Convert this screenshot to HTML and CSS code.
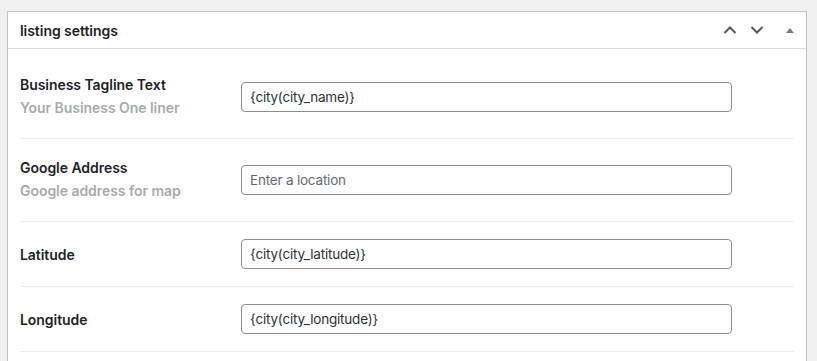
FILE: index.html
```html
<!DOCTYPE html>
<html lang="en">
  <head>
    <meta charset="UTF-8" />
    <meta name="viewport" content="width=device-width, initial-scale=1.0" />
    <title>listing settings</title>
    <link rel="stylesheet" href="styles.css">
  </head>
  <body>
    <div class="postbox">
      <div class="postbox-header">
        <h2 class="postbox-title">listing settings</h2>
        <div class="handle-actions">
          <button class="handle-btn" aria-label="Move up">
            <svg width="14" height="10" viewBox="0 0 14 10">
              <path d="M1.5 8 L7 2.5 L12.5 8" fill="none" stroke="#50575e" stroke-width="2" />
            </svg>
          </button>
          <button class="handle-btn" aria-label="Move down">
            <svg width="14" height="10" viewBox="0 0 14 10">
              <path d="M1.5 2 L7 7.5 L12.5 2" fill="none" stroke="#50575e" stroke-width="2" />
            </svg>
          </button>
          <button class="handle-btn toggle" aria-label="Toggle panel">
            <svg width="10" height="8" viewBox="0 0 10 8">
              <path d="M1 7 L5 2 L9 7 Z" fill="#787c82" />
            </svg>
          </button>
        </div>
      </div>

      <div class="postbox-inside">
        <div class="field-row">
          <div class="field-label">
            <label for="tagline">Business Tagline Text</label>
            <span class="field-desc">Your Business One liner</span>
          </div>
          <input id="tagline" class="field-input" type="text" value="{city(city_name)}" />
        </div>

        <div class="field-row">
          <div class="field-label">
            <label for="address">Google Address</label>
            <span class="field-desc">Google address for map</span>
          </div>
          <input id="address" class="field-input" type="text" placeholder="Enter a location" />
        </div>

        <div class="field-row">
          <div class="field-label">
            <label for="lat">Latitude</label>
          </div>
          <input id="lat" class="field-input" type="text" value="{city(city_latitude)}" />
        </div>

        <div class="field-row">
          <div class="field-label">
            <label for="lng">Longitude</label>
          </div>
          <input id="lng" class="field-input" type="text" value="{city(city_longitude)}" />
        </div>
      </div>
    </div>
  </body>
</html>
```

FILE: styles.css
```css
body {
  margin: 0;
  padding: 11px 10px 0 7px;
  background: #f0f0f1;
  font-family: Inter, "Liberation Sans", Arial, sans-serif;
  color: #1d2327;
}

.postbox {
  background: #fff;
  border: 1px solid #c3c4c7;
  border-bottom: none;
}

.postbox-header {
  display: flex;
  align-items: center;
  justify-content: space-between;
  height: 36px;
  padding: 0 12px;
  border-bottom: 1px solid #dcdcde;
}

.postbox-title {
  margin: 0;
  font-size: 14px;
  font-weight: 600;
  letter-spacing: -0.05px;
}

.handle-actions {
  display: flex;
  align-items: center;
  margin-right: -1px;
}

.handle-btn {
  display: flex;
  align-items: center;
  justify-content: center;
  width: 27px;
  height: 36px;
  padding: 0;
  background: none;
  border: none;
  cursor: pointer;
}

.handle-btn.toggle {
  width: 25px;
  justify-content: flex-end;
  padding-right: 0;
  box-sizing: border-box;
}

.postbox-inside {
  padding: 7px 12px 20px;
}

.field-row {
  display: flex;
  align-items: center;
  padding: 17px 0;
  border-bottom: 1px solid #ececec;
}

.field-label {
  display: flex;
  flex-direction: column;
  width: 221px;
  flex-shrink: 0;
}

.field-label label {
  font-size: 14px;
  font-weight: 600;
  line-height: 23px;
  letter-spacing: -0.05px;
}

.field-desc {
  font-size: 14px;
  font-weight: 600;
  line-height: 23px;
  color: #a7aaad;
  letter-spacing: -0.05px;
  padding-bottom: 2px;
}

.field-input {
  box-sizing: border-box;
  width: 491px;
  height: 30px;
  padding: 0 8px;
  border: 1px solid #8c8f94;
  border-radius: 4px;
  font-family: Inter, "Liberation Sans", Arial, sans-serif;
  font-size: 13.5px;
  letter-spacing: -0.2px;
  color: #2c3338;
  background: #fff;
}

.field-input::placeholder {
  color: #646970;
}
```
